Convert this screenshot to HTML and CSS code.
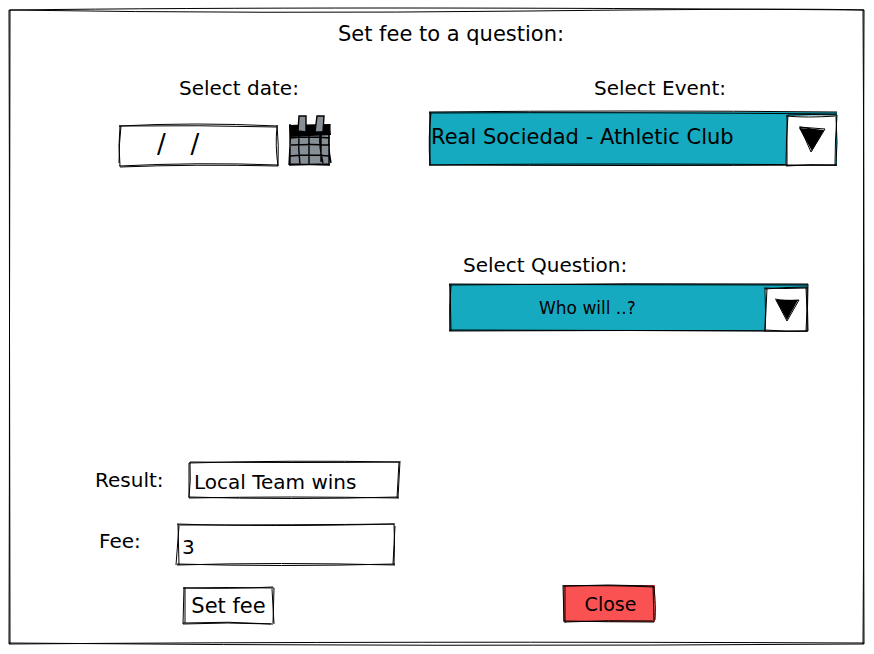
FILE: index.html
```html
<!DOCTYPE html>
<html lang="en">
<head>
<meta charset="utf-8">
<title>Set fee to a question</title>
<meta name="viewport" content="width=device-width, initial-scale=1">
<link rel="stylesheet" href="styles.css">
</head>
<body>
<main class="frame">
  <svg class="sketch" viewBox="0 0 855 634" preserveAspectRatio="none" aria-hidden="true">
    <path d="M1 0Q330-4 855 0M0 0Q250 4 520 1T855 0M0 0Q1 310 0 634M1 0Q0 320 1 634M855 0Q854 300 855 634M854 0Q856 340 854 634M0 634Q400 631 855 633M0 633Q430 637 855 634"/>
  </svg>
  <h1 class="title">Set fee to a question:</h1>

  <form class="form">
    <div class="date">
      <label class="date-label" for="date">Select date:</label>
      <div class="date-row">
        <div class="box date-box">
          <input class="field date-field" id="date" type="text" value="/   /">
          <svg class="sketch" viewBox="0 0 159 41" preserveAspectRatio="none" aria-hidden="true">
            <path d="M0 1Q75-3 159 1M0 1Q80 0 158 2M1 1Q-1 20 1 41M2 1Q0 18 0 38M158 2Q156 20 159 41M158 0Q160 20 159 41M0 41Q80 37 159 40M1 42Q75 39 159 41"/>
          </svg>
        </div>
        <button class="calendar" type="button" aria-label="Open calendar">
          <svg viewBox="0 0 42 51" aria-hidden="true">
            <path class="sheet" d="M1 10L41 9L41 50L1 50Z"/>
            <path class="binding" d="M0 10L41 9L42 20L1 22Z"/>
            <path class="grid" d="M1 9L1 50M2 10L0 50M1 49L41 50M0 50L40 49M41 9Q38 28 42 48M40 9L40 50M10 19Q9 34 11 50M20 18L20 50M31 18Q30 33 34 48M32 20L32 47M1 23Q20 21 41 23M2 30Q22 29 41 30M1 41Q20 39 40 41"/>
            <path class="ring" d="M10 1L17 1L17 17L9 16ZM28 1L35 1L34 17L26 17Z"/>
          </svg>
        </button>
      </div>
    </div>

    <div class="event">
      <label class="event-label" for="event">Select Event:</label>
      <div class="box event-box">
        <select class="field select event-select" id="event">
          <option>Real Sociedad - Athletic Club</option>
        </select>
        <svg class="sketch" viewBox="0 0 408 53" preserveAspectRatio="none" aria-hidden="true">
          <path d="M0 0Q200-2 408 0M0 1Q200 0 408 2M1 0L1 53M2 1Q-1 25 1 53M0 53Q200 54 408 53M0 53Q180 51 408 53"/>
        </svg>
        <svg class="arrow event-arrow" viewBox="0 0 51 51" preserveAspectRatio="none" aria-hidden="true">
          <path class="arrow-box" d="M1 1L50 0L50 50L0 50Z"/>
          <path class="line" d="M0 1Q20 3 50 1M2 0Q25-1 51 0M1 0L1 51M2 0Q0 25 0 50M51 0Q49 25 49 50M50 2Q52 28 50 50M0 50L51 50M0 51Q25 49 50 50"/>
          <path class="triangle" d="M13 13L38 15L26 36Z"/>
          <path class="line" d="M13 12L39 14L25 37L14 12L37 16"/>
        </svg>
      </div>
    </div>

    <div class="question">
      <label class="question-label" for="question">Select Question:</label>
      <div class="box question-box">
        <select class="field select question-select" id="question">
          <option>Who will ..?</option>
        </select>
        <svg class="sketch" viewBox="0 0 359 47" preserveAspectRatio="none" aria-hidden="true">
          <path d="M0 1Q180-1 359 0M0 0Q180 1 359 1M1 0L2 47M2 1Q0 25 1 47M359 0Q358 25 359 47M0 47Q180 46 359 47M1 46L359 47"/>
        </svg>
        <svg class="arrow question-arrow" viewBox="0 0 44 45" preserveAspectRatio="none" aria-hidden="true">
          <path class="arrow-box" d="M1 1L43 1L43 44L1 44Z"/>
          <path class="line" d="M0 1Q20 2 44 1M1 2Q24 0 43 0M1 1Q2 24 1 44M3 1L1 44M43 0L43 44M42 1Q44 24 42 44M0 44L43 44M1 43Q24 45 43 44"/>
          <path class="triangle" d="M12 13L34 13L23 33Z"/>
          <path class="line" d="M11 12Q20 14 35 13L23 34L12 13"/>
        </svg>
      </div>
    </div>

    <div class="answer">
      <div class="row">
        <label class="result-label" for="result">Result:</label>
        <div class="box result-box">
          <input class="field" id="result" type="text" value="Local Team wins">
          <svg class="sketch" viewBox="0 0 210 37" preserveAspectRatio="none" aria-hidden="true">
            <path d="M0 2Q100-1 210 1M1 1Q110 2 211 1M0 2L0 37M1 1Q2 20 0 36M211 0L209 37M210 1L208 37M0 36Q100 39 209 36M0 37Q100 35 210 37"/>
          </svg>
        </div>
      </div>
      <div class="row fee-row">
        <label class="fee-label" for="fee">Fee:</label>
        <div class="box fee-box">
          <input class="field" id="fee" type="text" inputmode="numeric" value="3">
          <svg class="sketch" viewBox="0 0 218 41" preserveAspectRatio="none" aria-hidden="true">
            <path d="M0 0Q90 3 217 0M1 1Q120 1 218 0M1 0L2 41M2 2L-1 41M217 0Q218 20 217 41M218 2L216 40M0 40Q100 43 218 40M0 41Q100 38 218 41"/>
          </svg>
        </div>
      </div>
    </div>

    <div class="actions">
      <button class="box button set-button" type="submit">Set fee
        <svg class="sketch" viewBox="0 0 91 37" preserveAspectRatio="none" aria-hidden="true">
          <path d="M0 1Q45 0 91 1M1 1Q50 2 90 0M1 0L0 37M2 1L2 36M91 1L90 36M89 2L91 37M0 36Q45 34 90 37M0 37Q45 35 88 37"/>
        </svg>
      </button>
      <button class="box button close-button" type="button">Close
        <svg class="sketch" viewBox="0 0 92 36" preserveAspectRatio="none" aria-hidden="true">
          <path d="M0 1Q45-1 91 1M1 1Q50 0 92 2M0 0L1 35M2 1L2 37M90 1L91 36M91 2Q93 20 92 34M1 35Q45 36 91 36M2 36Q45 34 90 35"/>
        </svg>
      </button>
    </div>
  </form>
</main>
</body>
</html>
```
FILE: styles.css
```css
* {
  box-sizing: border-box;
}

body {
  margin: 0;
  padding: 10px 10px 10px 9px;
  background: #fff;
  color: #000;
  font: 20px/28px "DejaVu Sans", sans-serif;
}

.frame {
  position: relative;
  min-height: calc(100vh - 20px);
  padding-top: 10px;
}

.sketch {
  position: absolute;
  inset: 0;
  width: 100%;
  height: 100%;
  overflow: visible;
  pointer-events: none;
}

.sketch path,
.line {
  fill: none;
  stroke: #000;
  stroke-width: 1;
  vector-effect: non-scaling-stroke;
}

.title {
  margin: 0;
  padding-left: 29px;
  font: inherit;
  font-size: 21px;
  text-align: center;
}

.form {
  display: grid;
  grid-template-columns: 420fr 435fr;
  padding-top: 26px;
}

.box {
  position: relative;
}

.field {
  display: block;
  width: 100%;
  height: 100%;
  margin: 0;
  padding: 4px 5px 0;
  border: 0;
  border-radius: 0;
  background: transparent;
  color: inherit;
  font: inherit;
  appearance: none;
}

.date {
  padding-left: 110px;
}

.date-label {
  display: block;
  padding-left: 60px;
}

.date-row {
  display: flex;
  align-items: flex-end;
  gap: 11px;
  height: 64px;
}

.date-box {
  width: 159px;
  height: 41px;
}

.date-field {
  padding: 0 38px 4px;
  font-size: 26px;
}

.calendar {
  width: 42px;
  height: 51px;
  padding: 0;
  border: 0;
  background: none;
}

.calendar svg {
  display: block;
  width: 100%;
  overflow: visible;
}

.sheet,
.ring {
  fill: #868e96;
}

.binding {
  fill: #000;
}

.grid,
.ring {
  stroke: #000;
  stroke-width: 1.4;
}

.grid {
  fill: none;
}

.event {
  padding-right: 27px;
}

.event-label {
  display: block;
  padding-left: 165px;
}

.event-box {
  height: 53px;
  margin-top: 10px;
}

.select {
  background: #15aabf;
}

.event-select {
  padding: 0 52px 4px 2px;
  font-size: 21px;
}

.arrow {
  position: absolute;
  overflow: visible;
  pointer-events: none;
}

.arrow-box {
  fill: #fff;
}

.triangle {
  fill: #000;
}

.event-arrow {
  top: 3px;
  right: 0;
  width: 51px;
  height: 51px;
}

.question {
  grid-column: 2;
  padding: 85px 56px 0 20px;
}

.question-label {
  display: block;
  padding-left: 14px;
}

.question-box {
  height: 47px;
  margin-top: 5px;
}

.question-select {
  padding: 0 46px 0 90px;
  font-size: 17px;
}

.question-arrow {
  top: 3px;
  right: 0;
  width: 44px;
  height: 45px;
}

.answer {
  grid-column: 1;
  padding: 130px 0 0 86px;
}

.row {
  display: flex;
  align-items: center;
}

.result-label {
  width: 94px;
}

.result-box {
  width: 210px;
  height: 37px;
}

.fee-row {
  margin-top: 26px;
}

.fee-label {
  width: 82px;
  padding: 0 0 8px 4px;
}

.fee-box {
  width: 218px;
  height: 41px;
}

.actions {
  display: grid;
  grid-column: 1 / -1;
  grid-template-columns: 380fr 301fr;
  align-items: start;
  padding: 20px 0 19px 174px;
}

.button {
  height: 37px;
  padding: 0;
  border: 0;
  color: inherit;
  font: inherit;
}

.set-button {
  width: 91px;
  margin-top: 2px;
  background: #fff;
  font-size: 21px;
}

.close-button {
  width: 92px;
  padding-left: 3px;
  background: #fa5252;
  font-size: 19px;
}
```
